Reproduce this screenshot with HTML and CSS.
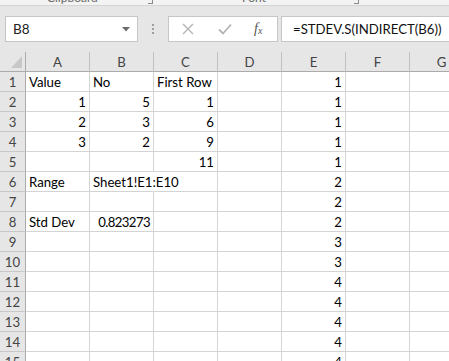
FILE: index.html
```html
<!DOCTYPE html>
<html>
<head>
<meta charset="utf-8">
<link rel="stylesheet" href="styles.css">
</head>
<body>
<div class="ribbon">
  <span class="group-label clip">Clipboard</span>
  <span class="launcher l1"></span>
  <span class="group-label font">Font</span>
  <span class="launcher l2"></span>
</div>
<div class="toolbar">
  <div class="namebox">
    <span class="name">B8</span>
    <svg class="drop" width="8" height="5" viewBox="0 0 8 5"><path d="M0 0H8L4 4.5Z" fill="#6d6d6d"/></svg>
  </div>
  <div class="dots"><i></i><i></i><i></i></div>
  <div class="fbuttons">
    <svg width="12" height="12" viewBox="0 0 12 12"><path d="M1 1L11 11M11 1L1 11" stroke="#b4b4b4" stroke-width="1.4" fill="none"/></svg>
    <svg width="14" height="12" viewBox="0 0 14 12"><path d="M1 6.5L5 10.5L13 1.5" stroke="#b4b4b4" stroke-width="1.8" fill="none"/></svg>
    <span class="fx">f<sub>x</sub></span>
  </div>
  <div class="formula">=STDEV.S(INDIRECT(B6))</div>
</div>
<div class="sheet">
  <div class="hd corner"><svg width="11" height="12" viewBox="0 0 11 12"><path d="M11 0V12H0Z" fill="#c8c8c8"/></svg></div>
  <div class="hd col">A</div><div class="hd col">B</div><div class="hd col">C</div><div class="hd col">D</div><div class="hd col">E</div><div class="hd col">F</div><div class="hd col">G</div>

  <div class="hd row">1</div><div class="c">Value</div><div class="c">No</div><div class="c">First Row</div><div class="c"></div><div class="c n">1</div><div class="c"></div><div class="c"></div>
  <div class="hd row">2</div><div class="c n">1</div><div class="c n">5</div><div class="c n">1</div><div class="c"></div><div class="c n">1</div><div class="c"></div><div class="c"></div>
  <div class="hd row">3</div><div class="c n">2</div><div class="c n">3</div><div class="c n">6</div><div class="c"></div><div class="c n">1</div><div class="c"></div><div class="c"></div>
  <div class="hd row">4</div><div class="c n">3</div><div class="c n">2</div><div class="c n">9</div><div class="c"></div><div class="c n">1</div><div class="c"></div><div class="c"></div>
  <div class="hd row">5</div><div class="c"></div><div class="c"></div><div class="c n">11</div><div class="c"></div><div class="c n">1</div><div class="c"></div><div class="c"></div>
  <div class="hd row">6</div><div class="c">Range</div><div class="c over">Sheet1!E1:E10</div><div class="c"></div><div class="c"></div><div class="c n">2</div><div class="c"></div><div class="c"></div>
  <div class="hd row">7</div><div class="c"></div><div class="c"></div><div class="c"></div><div class="c"></div><div class="c n">2</div><div class="c"></div><div class="c"></div>
  <div class="hd row">8</div><div class="c">Std Dev</div><div class="c n num8">0.823273</div><div class="c"></div><div class="c"></div><div class="c n">2</div><div class="c"></div><div class="c"></div>
  <div class="hd row">9</div><div class="c"></div><div class="c"></div><div class="c"></div><div class="c"></div><div class="c n">3</div><div class="c"></div><div class="c"></div>
  <div class="hd row">10</div><div class="c"></div><div class="c"></div><div class="c"></div><div class="c"></div><div class="c n">3</div><div class="c"></div><div class="c"></div>
  <div class="hd row">11</div><div class="c"></div><div class="c"></div><div class="c"></div><div class="c"></div><div class="c n">4</div><div class="c"></div><div class="c"></div>
  <div class="hd row">12</div><div class="c"></div><div class="c"></div><div class="c"></div><div class="c"></div><div class="c n">4</div><div class="c"></div><div class="c"></div>
  <div class="hd row">13</div><div class="c"></div><div class="c"></div><div class="c"></div><div class="c"></div><div class="c n">4</div><div class="c"></div><div class="c"></div>
  <div class="hd row">14</div><div class="c"></div><div class="c"></div><div class="c"></div><div class="c"></div><div class="c n">4</div><div class="c"></div><div class="c"></div>
  <div class="hd row">15</div><div class="c"></div><div class="c"></div><div class="c"></div><div class="c"></div><div class="c n">4</div><div class="c"></div><div class="c"></div>
</div>
</body>
</html>
```
FILE: styles.css
```css
html, body {
  margin: 0;
  padding: 0;
  width: 449px;
  height: 361px;
  overflow: hidden;
  background: #ffffff;
  font-family: Lato, "Open Sans", sans-serif;
}

.ribbon {
  position: relative;
  height: 5px;
  background: #f3f3f3;
  border-bottom: 1px solid #d4d4d4;
  overflow: hidden;
}
.group-label {
  position: absolute;
  top: -9px;
  font-size: 12px;
  line-height: 13px;
  color: #6a6a6a;
}
.group-label.clip { left: 47px; }
.group-label.font { left: 242px; }
.launcher {
  position: absolute;
  top: 0;
  width: 4px;
  height: 3px;
  border-right: 1px solid #8a8a8a;
  border-bottom: 1px solid #8a8a8a;
}
.launcher.l1 { left: 148px; }
.launcher.l2 { left: 354px; }

.toolbar {
  height: 46px;
  background: #e6e6e6;
  display: flex;
  align-items: flex-start;
  padding-top: 10px;
  box-sizing: border-box;
  overflow: hidden;
}
.toolbar > * { flex-shrink: 0; }
.namebox {
  margin-left: 5px;
  width: 133px;
  height: 26px;
  box-sizing: border-box;
  background: #fff;
  border: 1px solid #c6c6c6;
  display: flex;
  align-items: center;
  justify-content: space-between;
  padding: 0 7px 0 7px;
}
.name {
  font-size: 13.5px;
  color: #222;
}
.drop { margin-top: 1px; }
.dots {
  width: 30px;
  height: 26px;
  display: flex;
  flex-direction: column;
  align-items: center;
  justify-content: center;
  gap: 2px;
}
.dots i {
  display: block;
  width: 2px;
  height: 2px;
  background: #9e9e9e;
}
.fbuttons {
  width: 110px;
  height: 26px;
  box-sizing: border-box;
  background: #fff;
  border: 1px solid #c6c6c6;
  display: flex;
  align-items: center;
  padding-left: 13px;
  gap: 24px;
}
.fx {
  font-family: "Liberation Serif", serif;
  font-style: italic;
  font-size: 14px;
  color: #555;
  margin-left: -2px;
}
.fx sub {
  font-size: 10px;
  vertical-align: baseline;
  position: relative;
  top: 1px;
}
.formula {
  margin-left: 3px;
  flex: 1 1 auto;
  min-width: 0;
  height: 26px;
  box-sizing: border-box;
  background: #fff;
  border: 1px solid #c6c6c6;
  border-right: none;
  padding-left: 11px;
  font-size: 13.2px;
  line-height: 24px;
  color: #111;
  white-space: nowrap;
  overflow: hidden;
}

.sheet {
  display: grid;
  grid-template-columns: 26px repeat(7, 64px);
  grid-auto-rows: 20px;
  font-size: 13.2px;
}
.sheet > div {
  box-sizing: border-box;
  border-right: 1px solid #d4d4d4;
  border-bottom: 1px solid #d4d4d4;
  line-height: 20px;
  white-space: nowrap;
  color: #000;
}
.sheet > .hd {
  background: #e6e6e6;
  color: #444;
  text-align: center;
}
.sheet > .col {
  border-right-color: #c0c0c0;
  border-bottom-color: #ababab;
}
.sheet > .row {
  border-right-color: #ababab;
  border-bottom-color: #c8c8c8;
}
.sheet > .corner {
  border-right-color: #ababab;
  border-bottom-color: #ababab;
  display: flex;
  align-items: flex-end;
  justify-content: flex-end;
  padding: 0 3px 3px 0;
}
.c { padding: 0 3px; }
.c.n { text-align: right; }
.sheet > .c.num8 { letter-spacing: -0.6px; padding-right: 3px; }
.sheet > .c.over {
  overflow: visible;
  position: relative;
  z-index: 1;
  border-right-color: #ffffff;
}
```
